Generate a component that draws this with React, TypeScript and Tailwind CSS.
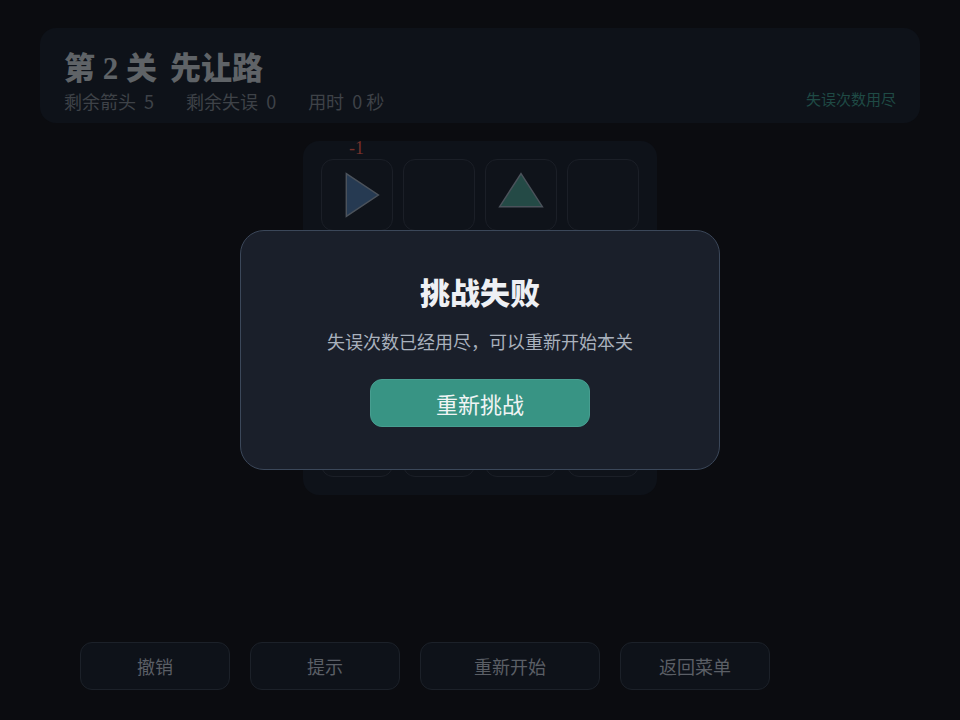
import { ReactNode } from "react";

const cells = [
  "right", null, "up", null,
  null, null, null, null,
  null, null, null, null,
  null, null, null, null,
];

function Arrow({ dir }: { dir: string }) {
  if (dir === "right") {
    return (
      <svg width="72" height="72" viewBox="0 0 72 72">
        <polygon points="25,14 58,36 25,58" fill="#263a52" stroke="#4b525b" strokeWidth="1.5" />
      </svg>
    );
  }
  return (
    <svg width="72" height="72" viewBox="0 0 72 72">
      <polygon points="36,14 58,48 14,48" fill="#244a46" stroke="#4b525b" strokeWidth="1.5" />
    </svg>
  );
}

function ActionButton({ children, wide }: { children: ReactNode; wide?: boolean }) {
  return (
    <button
      className={`${wide ? "w-[180px]" : "w-[150px]"} h-12 rounded-xl border border-[#1c2129] bg-[#0e1219] text-lg text-[#5b5f66]`}
    >
      {children}
    </button>
  );
}

export default function App() {
  return (
    <div className="relative h-[720px] w-full overflow-hidden bg-[#0b0c10] font-['Noto_Sans_CJK_SC',sans-serif]">
      <div className="flex h-full flex-col px-10 pt-7 pb-[30px]">
        {/* header */}
        <div className="flex h-[95px] items-end justify-between rounded-2xl bg-[#0e1219] px-6 pb-[10px]">
          <div>
            <h1 className="flex gap-[13px] font-['Liberation_Serif','Noto_Sans_CJK_SC',serif] text-[31px] leading-[40px] font-black text-[#5f6367]">
              <span>第 2 关</span>
              <span>先让路</span>
            </h1>
            <div className="flex gap-8 text-lg leading-6 text-[#3e4248]">
              <span>剩余箭头&nbsp; 5</span>
              <span>剩余失误&nbsp; 0</span>
              <span>用时&nbsp; 0 秒</span>
            </div>
          </div>
          <span className="pb-[3px] text-[15px] text-[#1f4a45]">失误次数用尽</span>
        </div>

        {/* board */}
        <div className="relative mx-auto mt-[18px] grid w-[354px] grid-cols-4 gap-[10px] rounded-2xl bg-[#0e1219] p-[18px]">
          {cells.map((c, i) => (
            <div
              key={i}
              className="flex h-[72px] w-[72px] items-center justify-center rounded-xl border border-[#1b1f27] bg-[#0f131a]"
            >
              {c && <Arrow dir={c} />}
            </div>
          ))}
          <span className="absolute top-[-7px] left-[46px] font-['Liberation_Serif',serif] text-lg text-[#74302a]">
            -1
          </span>
        </div>

        {/* controls */}
        <div className="mt-auto flex gap-5 pl-10">
          <ActionButton>撤销</ActionButton>
          <ActionButton>提示</ActionButton>
          <ActionButton wide>重新开始</ActionButton>
          <ActionButton>返回菜单</ActionButton>
        </div>
      </div>

      {/* overlay */}
      <div className="absolute inset-0 flex items-center justify-center pb-5">
        <div className="flex h-[240px] w-[480px] flex-col items-center rounded-3xl border border-[#3b4759] bg-[#1a1f2a] pt-10">
          <h2 className="text-[30px] leading-10 font-black text-[#eef0f4]">挑战失败</h2>
          <p className="mt-4 text-lg leading-7 text-[#a9b1bd]">失误次数已经用尽，可以重新开始本关</p>
          <button className="mt-6 h-12 w-[220px] rounded-xl border border-[#479e90] bg-[#389484] text-[22px] text-[#f0f4f4]">
            重新挑战
          </button>
        </div>
      </div>
    </div>
  );
}
